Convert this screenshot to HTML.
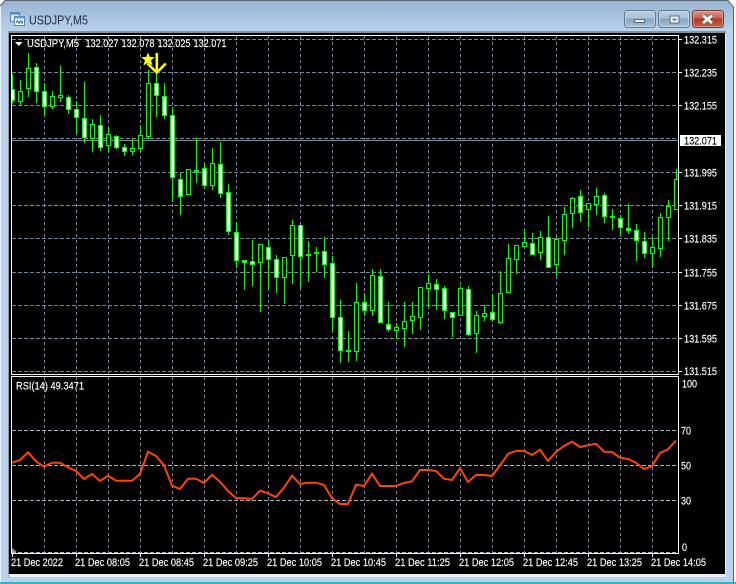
<!DOCTYPE html>
<html><head><meta charset="utf-8"><title>USDJPY,M5</title>
<style>
html,body{margin:0;padding:0;background:#fff;overflow:hidden}
svg{display:block}
text{font-family:"Liberation Sans",sans-serif;font-size:11px;fill:#fff;stroke:#fff;stroke-width:.15px}
</style></head><body>
<svg width="736" height="584" viewBox="0 0 736 584" xmlns="http://www.w3.org/2000/svg">
<defs>
<linearGradient id="tb" x1="0" y1="0" x2="0" y2="1"><stop offset="0" stop-color="#98b4d2"/><stop offset=".055" stop-color="#bad3ed"/><stop offset="1" stop-color="#bad3ed"/></linearGradient>
<linearGradient id="bt" x1="0" y1="0" x2="0" y2="1"><stop offset="0" stop-color="#bccfe2"/><stop offset=".45" stop-color="#a9c0d8"/><stop offset=".5" stop-color="#86a2c0"/><stop offset="1" stop-color="#a8c4e2"/></linearGradient>
<linearGradient id="cl" x1="0" y1="0" x2="0" y2="1"><stop offset="0" stop-color="#dc9c8e"/><stop offset=".45" stop-color="#c9604c"/><stop offset=".5" stop-color="#b23a25"/><stop offset="1" stop-color="#c8604a"/></linearGradient>
<clipPath id="cc"><rect x="12" y="36" width="666" height="338"/></clipPath>
</defs>
<!-- window frame -->
<path d="M5 0H727L735 8V584H0V5Z" fill="url(#tb)"/>
<path d="M0.5 6L5 .5H728L733.5 7V582" fill="none" stroke="#5a6672" stroke-width="1"/>
<rect x="0" y="6" width="1" height="578" fill="#eef3f8"/>
<rect x="734" y="6" width="2" height="578" fill="#f4f7fa"/>
<rect x="0" y="582" width="736" height="2" fill="#2fb4c8"/>
<!-- client area -->
<rect x="8" y="31" width="718" height="546" fill="#e8eef4"/>
<rect x="8" y="31" width="718" height="2" fill="#85909c"/>
<rect x="8" y="31" width="1" height="546" fill="#8d98a4"/>
<rect x="9" y="33" width="716" height="541" fill="#000"/>
<!-- title -->
<g>
<rect x="10.5" y="12.5" width="9" height="9" fill="#dbe8f6" stroke="#4f86c6"/>
<rect x="10.5" y="12.5" width="9" height="2" fill="#4f86c6"/>
<rect x="14.5" y="16.5" width="10" height="9" fill="#fff" stroke="#4f86c6"/>
<rect x="14.5" y="16.5" width="10" height="2" fill="#5f96d6"/>
<path d="M16 23L17.5 20.5L19 23.5L20.5 20.5L22 23.5L23 21" fill="none" stroke="#3c68a0" stroke-width="1"/>
</g>
<text x="29" y="24.5" textLength="59" lengthAdjust="spacingAndGlyphs" style="font-size:12.5px;fill:#1c2c40;stroke:none">USDJPY,M5</text>
<!-- buttons -->
<rect x="624.5" y="10.5" width="31" height="17" rx="3" fill="url(#bt)" stroke="#5f758c"/>
<rect x="625.5" y="11.5" width="29" height="15" rx="2" fill="none" stroke="#dfe9f3" stroke-opacity=".55"/>
<rect x="634.5" y="19.5" width="10" height="3" fill="#f2f5f8" stroke="#5c6b7b"/>
<rect x="658.5" y="10.5" width="31" height="17" rx="3" fill="url(#bt)" stroke="#5f758c"/>
<rect x="659.5" y="11.5" width="29" height="15" rx="2" fill="none" stroke="#dfe9f3" stroke-opacity=".55"/>
<rect x="669.5" y="15.5" width="10" height="8" fill="#5c6b7b"/>
<rect x="670.5" y="16.5" width="8" height="6" fill="#f2f5f8"/>
<rect x="672.5" y="18.5" width="4" height="2" fill="#6c7f94"/>
<rect x="692.5" y="10.5" width="31" height="17" rx="3" fill="url(#cl)" stroke="#6f3a34"/>
<rect x="693.5" y="11.5" width="29" height="15" rx="2" fill="none" stroke="#f2c8bd" stroke-opacity=".5"/>
<path d="M703 15.5L712 23M712 15.5L703 23" stroke="#5a5a5a" stroke-width="4.4" fill="none"/>
<path d="M703 15.5L712 23M712 15.5L703 23" stroke="#f4f4f4" stroke-width="2.8" fill="none"/>

<!-- grid main -->
<g stroke="#778899" stroke-width="1" fill="none" shape-rendering="crispEdges">
<path stroke-dasharray="4 2" d="M12 39.5H678M12 72.5H678M12 105.5H678M12 138.5H678M12 172.5H678M12 205.5H678M12 238.5H678M12 272.5H678M12 305.5H678M12 338.5H678M12 371.5H678"/>
<path stroke-dasharray="3 3" d="M44.5 36V374M76.5 36V374M108.5 36V374M140.5 36V374M172.5 36V374M204.5 36V374M236.5 36V374M268.5 36V374M300.5 36V374M332.5 36V374M364.5 36V374M396.5 36V374M428.5 36V374M460.5 36V374M492.5 36V374M524.5 36V374M556.5 36V374M588.5 36V374M620.5 36V374M652.5 36V374"/>
</g>
<!-- current price line -->
<rect x="12" y="140" width="666" height="1" fill="#7b8b9b"/>

<!-- candles -->
<g clip-path="url(#cc)" shape-rendering="crispEdges" stroke="#00ff00" stroke-width="1">
<path fill="none" d="M12.5 74V103M20.5 80V105M28.5 53V97M36.5 63V103M44.5 83V115M52.5 91V109M60.5 66V102M68.5 95V114M76.5 101V134M84.5 82V143M92.5 119V152M100.5 115V151M108.5 128V152M116.5 135V149M124.5 144V156M132.5 139V155M140.5 125V152M148.5 70V139M156.5 66V117M164.5 83V119M172.5 107V202M180.5 173V215M188.5 169V195M196.5 138V183M204.5 163V189M212.5 148V190M220.5 142V198M228.5 184V235M236.5 222V268M244.5 260V290M252.5 240V286M260.5 244V312M268.5 239V290M276.5 255V293M284.5 257V304M292.5 220V284M300.5 225V288M308.5 241V282M316.5 247V272M324.5 237V278M332.5 256V332M340.5 300V363M348.5 331V362M356.5 283V361M364.5 293V316M372.5 269V316M380.5 269V322M388.5 302V332M396.5 323V339M404.5 302V347M412.5 302V334M420.5 287V330M428.5 274V307M436.5 279V310M444.5 286V319M452.5 312V337M460.5 286V315M468.5 286V336M476.5 311V353M484.5 305V321M492.5 294V322M500.5 271V324M508.5 244V293M516.5 245V274M524.5 230V246M532.5 233V254M540.5 231V260M548.5 216V267M556.5 237V276M564.5 207V255M572.5 197V228M580.5 190V222M588.5 203V227M596.5 188V215M604.5 193V223M612.5 209V230M620.5 215V236M628.5 204V234M636.5 224V261M644.5 232V258M652.5 237V268M660.5 213V257M668.5 200V241M676.5 169V209"/>
<!-- bull: hollow -->
<path fill="#000" d="M18.5 91.5h4v10h-4zM26.5 68.5h4v20h-4zM50.5 96.5h4v10h-4zM58.5 95.5h4v2h-4zM90.5 124.5h4v14h-4zM106.5 134.5h4v11h-4zM130.5 148.5h4v3h-4zM138.5 135.5h4v13h-4zM146.5 83.5h4v53h-4zM186.5 169.5h4v25h-4zM210.5 163.5h4v22h-4zM258.5 244.5h4v18h-4zM282.5 257.5h4v20h-4zM290.5 225.5h4v30h-4zM354.5 302.5h4v49h-4zM370.5 275.5h4v35h-4zM394.5 327.5h4v3h-4zM402.5 321.5h4v7h-4zM410.5 316.5h4v4h-4zM418.5 287.5h4v30h-4zM426.5 283.5h4v5h-4zM458.5 288.5h4v27h-4zM474.5 315.5h4v18h-4zM482.5 313.5h4v3h-4zM498.5 293.5h4v29h-4zM506.5 258.5h4v34h-4zM514.5 245.5h4v14h-4zM522.5 242.5h4v4h-4zM538.5 237.5h4v15h-4zM554.5 239.5h4v25h-4zM562.5 214.5h4v26h-4zM570.5 198.5h4v15h-4zM586.5 203.5h4v6h-4zM594.5 196.5h4v8h-4zM650.5 247.5h4v6h-4zM658.5 217.5h4v31h-4zM666.5 206.5h4v11h-4zM674.5 179.5h4v30h-4z"/>
<!-- bear: white -->
<path fill="#fff" d="M10.5 89.5h4v11h-4zM34.5 67.5h4v24h-4zM42.5 91.5h4v15h-4zM66.5 97.5h4v12h-4zM74.5 109.5h4v8h-4zM82.5 118.5h4v19h-4zM98.5 125.5h4v22h-4zM114.5 136.5h4v11h-4zM122.5 147.5h4v4h-4zM154.5 83.5h4v12h-4zM162.5 96.5h4v19h-4zM170.5 115.5h4v62h-4zM178.5 179.5h4v17h-4zM202.5 168.5h4v17h-4zM218.5 164.5h4v29h-4zM226.5 192.5h4v39h-4zM234.5 232.5h4v28h-4zM242.5 260.5h4v2h-4zM250.5 261.5h4v3h-4zM266.5 247.5h4v12h-4zM274.5 259.5h4v18h-4zM298.5 225.5h4v31h-4zM322.5 251.5h4v13h-4zM330.5 263.5h4v54h-4zM338.5 317.5h4v33h-4zM362.5 302.5h4v8h-4zM378.5 276.5h4v46h-4zM386.5 324.5h4v5h-4zM434.5 284.5h4v5h-4zM442.5 288.5h4v22h-4zM450.5 312.5h4v5h-4zM466.5 289.5h4v45h-4zM490.5 312.5h4v7h-4zM530.5 243.5h4v11h-4zM546.5 237.5h4v30h-4zM578.5 196.5h4v16h-4zM602.5 195.5h4v21h-4zM618.5 218.5h4v9h-4zM626.5 228.5h4v2h-4zM634.5 230.5h4v10h-4zM642.5 241.5h4v12h-4z"/>
<!-- dojis -->
<path fill="#00ff00" d="M194.5 170.5h4v1h-4zM306.5 254.5h4v1h-4zM314.5 252.5h4v1h-4zM346.5 350.5h4v1h-4zM610.5 216.5h4v1h-4z"/>
</g>

<!-- arrow / star -->
<path d="M156.8 53V72M147.5 63.5L156.8 72.5L165.8 63.5" fill="none" stroke="#ffff00" stroke-width="2.6"/>
<polygon points="148,52.5 149.9,57 154.8,57 151,60.4 152.6,65.5 148,62.6 143.4,65.5 145,60.4 141.2,57 146.1,57" fill="#ffff14"/>

<!-- indicator grid -->
<g stroke-width="1" fill="none" shape-rendering="crispEdges">
<path stroke="#a9b3bd" stroke-dasharray="4 2" d="M12 430.5H678M12 465.5H678M12 500.5H678M12 552.5H678"/>
<path stroke="#778899" stroke-dasharray="3 3" d="M44.5 377V553M76.5 377V553M108.5 377V553M140.5 377V553M172.5 377V553M204.5 377V553M236.5 377V553M268.5 377V553M300.5 377V553M332.5 377V553M364.5 377V553M396.5 377V553M428.5 377V553M460.5 377V553M492.5 377V553M524.5 377V553M556.5 377V553M588.5 377V553M620.5 377V553M652.5 377V553"/>
</g>
<polygon points="12,548 12,552 17,552" fill="#8b97a3"/>
<!-- RSI -->
<polyline fill="none" stroke="#ff4500" stroke-width="2" points="12,462.7 20,460 28,452.3 36,461.3 44,466.7 52,462.7 60,462.7 68,467.3 76,471 84,479 92,474 100,481 108,475.7 116,480.7 124,480.7 132,480.7 140,474 148,451.7 156,456 164,465.3 172,485.7 180,489 188,478.7 196,478.7 204,483 212,474.7 220,481.7 228,491 236,498 244,498.3 252,499 260,490.7 268,493.3 276,497 284,487.7 292,475.7 300,484 308,482.7 316,482.7 324,485 332,498.3 340,504 348,504 356,484.7 364,486 372,473.7 380,486 388,486 396,486 404,483 412,481.3 420,470 428,470 436,471 444,478.7 452,480 460,468.3 468,482 476,475 484,475 492,476 500,465.3 508,454 516,451 524,450.7 532,455 540,449.7 548,461 556,452 564,446 572,441.7 580,447 588,445.3 596,443.7 604,451.7 612,452 620,457.7 628,459 636,462.7 644,469 652,466.3 660,453 668,449.3 676,440.7"/>

<!-- frames -->
<g fill="#fff" shape-rendering="crispEdges">
<rect x="11" y="35" width="668" height="1"/>
<rect x="11" y="35" width="1" height="339"/>
<rect x="678" y="35" width="1" height="339"/>
<rect x="11" y="374" width="668" height="1"/>
<rect x="11" y="376" width="668" height="1"/>
<rect x="11" y="376" width="1" height="178"/>
<rect x="678" y="376" width="1" height="178"/>
<rect x="11" y="553" width="668" height="1"/>
<!-- price ticks -->
<path d="M679 39h3v1h-3zM679 72h3v1h-3zM679 105h3v1h-3zM679 172h3v1h-3zM679 205h3v1h-3zM679 238h3v1h-3zM679 272h3v1h-3zM679 305h3v1h-3zM679 338h3v1h-3zM679 371h3v1h-3z"/>
<!-- time ticks -->
<path d="M12 554h1v3h-1zM76 554h1v3h-1zM140 554h1v3h-1zM204 554h1v3h-1zM268 554h1v3h-1zM332 554h1v3h-1zM396 554h1v3h-1zM460 554h1v3h-1zM524 554h1v3h-1zM588 554h1v3h-1zM652 554h1v3h-1z"/>
</g>

<!-- header text -->
<polygon points="15,42 22.5,42 18.7,46" fill="#fff"/>
<text x="27" y="47" textLength="52" lengthAdjust="spacingAndGlyphs">USDJPY,M5</text>
<text x="85.5" y="47" textLength="33" lengthAdjust="spacingAndGlyphs">132.027</text>
<text x="121.5" y="47" textLength="33" lengthAdjust="spacingAndGlyphs">132.078</text>
<text x="157.5" y="47" textLength="33" lengthAdjust="spacingAndGlyphs">132.025</text>
<text x="193.5" y="47" textLength="33" lengthAdjust="spacingAndGlyphs">132.071</text>
<text x="16" y="389.5" textLength="68" lengthAdjust="spacingAndGlyphs">RSI(14) 49.3471</text>

<!-- prices -->
<g>
<text x="684" y="43.5" textLength="33" lengthAdjust="spacingAndGlyphs">132.315</text>
<text x="684" y="76.5" textLength="33" lengthAdjust="spacingAndGlyphs">132.235</text>
<text x="684" y="109.5" textLength="33" lengthAdjust="spacingAndGlyphs">132.155</text>
<rect x="680" y="135" width="41" height="11" fill="#fff"/>
<text x="684" y="144.5" textLength="33" lengthAdjust="spacingAndGlyphs" style="fill:#000;stroke:#000">132.071</text>
<text x="684" y="176.5" textLength="33" lengthAdjust="spacingAndGlyphs">131.995</text>
<text x="684" y="209.5" textLength="33" lengthAdjust="spacingAndGlyphs">131.915</text>
<text x="684" y="242.5" textLength="33" lengthAdjust="spacingAndGlyphs">131.835</text>
<text x="684" y="276.5" textLength="33" lengthAdjust="spacingAndGlyphs">131.755</text>
<text x="684" y="309.5" textLength="33" lengthAdjust="spacingAndGlyphs">131.675</text>
<text x="684" y="342.5" textLength="33" lengthAdjust="spacingAndGlyphs">131.595</text>
<text x="684" y="375" textLength="33" lengthAdjust="spacingAndGlyphs">131.515</text>
<text x="682" y="387.5" textLength="15" lengthAdjust="spacingAndGlyphs">100</text>
<text x="681" y="434.5" textLength="10" lengthAdjust="spacingAndGlyphs">70</text>
<text x="681" y="469.5" textLength="10" lengthAdjust="spacingAndGlyphs">50</text>
<text x="681" y="504.5" textLength="10" lengthAdjust="spacingAndGlyphs">30</text>
<text x="682" y="551" textLength="5" lengthAdjust="spacingAndGlyphs">0</text>
</g>

<!-- dates -->
<g>
<text x="11" y="566" textLength="52" lengthAdjust="spacingAndGlyphs">21 Dec 2022</text>
<text x="75" y="566" textLength="55" lengthAdjust="spacingAndGlyphs">21 Dec 08:05</text>
<text x="139" y="566" textLength="55" lengthAdjust="spacingAndGlyphs">21 Dec 08:45</text>
<text x="203" y="566" textLength="55" lengthAdjust="spacingAndGlyphs">21 Dec 09:25</text>
<text x="267" y="566" textLength="55" lengthAdjust="spacingAndGlyphs">21 Dec 10:05</text>
<text x="331" y="566" textLength="55" lengthAdjust="spacingAndGlyphs">21 Dec 10:45</text>
<text x="395" y="566" textLength="55" lengthAdjust="spacingAndGlyphs">21 Dec 11:25</text>
<text x="459" y="566" textLength="55" lengthAdjust="spacingAndGlyphs">21 Dec 12:05</text>
<text x="523" y="566" textLength="55" lengthAdjust="spacingAndGlyphs">21 Dec 12:45</text>
<text x="587" y="566" textLength="55" lengthAdjust="spacingAndGlyphs">21 Dec 13:25</text>
<text x="651" y="566" textLength="55" lengthAdjust="spacingAndGlyphs">21 Dec 14:05</text>
</g>
</svg>
</body></html>
